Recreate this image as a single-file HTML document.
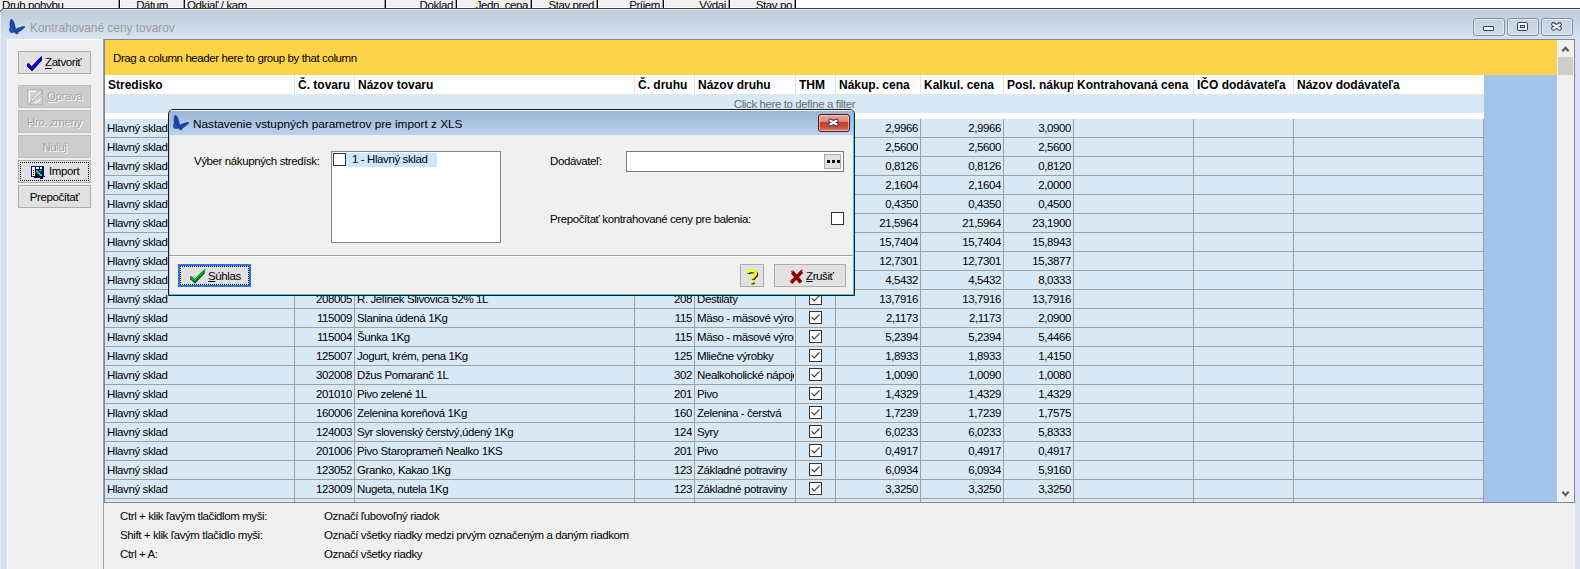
<!DOCTYPE html><html><head><meta charset="utf-8"><title>Kontrahované ceny tovarov</title><style>
*{margin:0;padding:0;box-sizing:border-box}
html,body{width:1580px;height:569px;overflow:hidden;background:#fff}
body{position:relative;font-family:"Liberation Sans",sans-serif;font-size:11.5px;color:#000;letter-spacing:-0.4px}
.a{position:absolute}
.t{position:absolute;white-space:nowrap;line-height:18px}
.hs{position:absolute;top:0;width:3px;height:8px;background:linear-gradient(90deg,#a0a0a0 0,#a0a0a0 1px,#000 1px,#000 2px,#fff 2px)}
.ht{position:absolute;top:-2px;white-space:nowrap;line-height:14px}
.btn{position:absolute;left:18px;width:73px;height:23px;background:#e1e1e1;border:1px solid #adadad;line-height:23px;text-align:center;white-space:nowrap}
.dis{background:#cccccc;border-color:#bfbfbf;color:#a3a3a3;text-shadow:1px 1px 0 #fff}
.row{position:absolute;left:105px;width:1379px;height:18px;background:#d9e8f5}
.rl{position:absolute;left:105px;width:1379px;height:1px;background:#a0a0a0}
.cl{position:absolute;width:1px;background:#a0a0a0}
.cell{position:absolute;white-space:nowrap;overflow:hidden;line-height:18px;height:18px}
.hdr{position:absolute;white-space:nowrap;overflow:hidden;line-height:19px;height:19px;font-weight:bold;font-size:12px;letter-spacing:0}
.hsep{position:absolute;top:75px;width:1px;height:19px;background:#e3e3e3}
.chk{position:absolute;width:13px;height:13px;border:1px solid #333;background:#fff}
.tbb{position:absolute;top:18px;width:32px;height:18px;border:1px solid #8591ab;border-radius:3px;background:linear-gradient(#c6d3e1,#cfdbe8);box-shadow:inset 0 0 0 1px rgba(255,255,255,.45)}
</style></head><body>
<div class="a" style="left:0;top:0;width:797px;height:9px;background:#f0f0f0;overflow:hidden">
<div class="a" style="left:0;top:7px;width:797px;height:1px;background:#fff"></div>
<div class="hs" style="left:118px"></div>
<div class="hs" style="left:183px"></div>
<div class="hs" style="left:384px"></div>
<div class="hs" style="left:455px"></div>
<div class="hs" style="left:530px"></div>
<div class="hs" style="left:596px"></div>
<div class="hs" style="left:662px"></div>
<div class="hs" style="left:728px"></div>
<div class="hs" style="left:794px"></div>
<div class="ht" style="left:2px">Druh pohybu</div>
<div class="ht" style="right:629px">Dátum</div>
<div class="ht" style="left:187px">Odkiaľ / kam</div>
<div class="ht" style="right:344px">Doklad</div>
<div class="ht" style="right:269px">Jedn. cena</div>
<div class="ht" style="right:203px">Stav pred</div>
<div class="ht" style="right:137px">Príjem</div>
<div class="ht" style="right:71px">Výdaj</div>
<div class="ht" style="right:5px">Stav po</div>
</div>
<div class="a" style="left:-1px;top:8px;width:1600px;height:600px;border:1px solid #3c3c3c;border-top-left-radius:6px;background:linear-gradient(#bdccdb 0px,#c3d1df 8px,#d5e2ef 28px,#d6e3f1 30px);overflow:hidden">
<div class="a" style="left:0;top:0;width:100%;height:1px;background:#e6edf4"></div>
<div class="a" style="left:0;top:0;width:1px;height:100%;background:#e6edf4"></div>
</div>
<div class="a" style="left:6px;top:16px;width:24px;height:22px"><svg width="24" height="22" viewBox="0 0 24 22"><path d="M5.4 3 C6.8 3.2 7.8 5 8.6 7.5 L10 12.7 C12.5 11.2 15.5 10.3 19 10 L19 11.3 C17 13.5 14.8 15.2 12.7 16.2 C12.4 17.2 11.8 18.2 10.8 18.2 C9.8 18.2 9.2 17.3 8.9 16.4 C7.2 16.6 5.5 16.8 4.2 16.6 C3.4 15.8 3 14.2 3.1 13 C3.4 12.2 3.8 11.8 3.9 11.5 C3.6 9 3.6 6.5 3.9 5 C4.2 3.8 4.7 3.1 5.4 3Z" fill="#1b46a9"/><path d="M4.6 12.5 L6.5 14.8" stroke="#5a7cc8" stroke-width="0.8"/></svg></div>
<div class="a" style="left:30px;top:17px;line-height:22px;font-size:11.9px;letter-spacing:0;color:#9a98a0;white-space:nowrap">Kontrahované ceny tovarov</div>
<div class="tbb" style="left:1473px"></div>
<div class="tbb" style="left:1507px"></div>
<div class="tbb" style="left:1541px"></div>
<div class="a" style="left:1483px;top:26px;width:11px;height:5px;border:1px solid #3a3f4a;border-radius:1px;background:#f4f4f4"></div>
<div class="a" style="left:1517px;top:22px;width:11px;height:9px;border:1px solid #3a3f4a;border-radius:1.5px;background:linear-gradient(#fafafa,#e4e4e4)"></div>
<div class="a" style="left:1520px;top:25px;width:5px;height:3px;border:1px solid #3a3f4a;background:#d0dae6"></div>
<svg class="a" style="left:1550px;top:21px" width="13" height="11" viewBox="0 0 13 11"><path d="M3.3 3.4 L9.7 7.4 M9.7 3.4 L3.3 7.4" stroke="#3a3f4a" stroke-width="4.4" stroke-linecap="round"/><path d="M3.3 3.4 L9.7 7.4 M9.7 3.4 L3.3 7.4" stroke="#f2f2f2" stroke-width="2.4" stroke-linecap="round"/></svg>
<div class="a" style="left:7px;top:39px;width:1568px;height:600px;background:#f0f0f0;border-top:1px solid #fff;border-left:1px solid #fff"></div>
<div class="btn" style="top:51px"></div>
<div class="a" style="left:24px;top:53px;width:22px;height:20px"><svg width="22" height="20" viewBox="0 0 22 20"><polygon points="3,11.2 4.4,10 7.6,13.4 17.6,3 17.9,7.4 8.1,18.2 3,13.4" fill="#000"/><polygon points="3,11.2 4.4,10 7.6,13.4 17.6,3 17.9,6.4 8.1,17 3,12.4" fill="#0000ff"/></svg></div>
<div class="t" style="left:45px;top:53px"><u style="text-underline-offset:2px">Z</u>atvoriť</div>
<div class="btn dis" style="top:85px"></div>
<div class="a" style="left:27px;top:89px"><svg width="16" height="16" viewBox="0 0 16 16"><rect x="0.5" y="0.5" width="15" height="15" fill="#d0d0d0" stroke="#b6b6b6"/><path d="M2.5 14 V2.5 H9" stroke="#fff" stroke-width="1.2" fill="none"/><polygon points="2,15 10,3 13,0.8 15,2.5 13.5,5.5" fill="#dedede" stroke="#a6a6a6" stroke-width="0.8"/><path d="M5 11 L10.5 4.5" stroke="#fff" stroke-width="1" stroke-dasharray="1.2 0.8"/><path d="M8 13.6 Q11.5 13 13.5 10" stroke="#fff" stroke-width="1.2" fill="none"/></svg></div>
<div class="t" style="left:47px;top:87px;color:#a3a3a3;text-shadow:1px 1px 0 #fff"><u>O</u>prava</div>
<div class="btn dis" style="top:110px">Hro. zmeny</div>
<div class="btn dis" style="top:135px">Nuluj</div>
<div class="btn" style="top:160px"></div>
<div class="a" style="left:20px;top:162px;width:69px;height:19px;border:1px dotted #000"></div>
<div class="a" style="left:30px;top:165px;width:16px;height:15px"><svg width="16" height="15" viewBox="0 0 16 15"><g shape-rendering="crispEdges"><rect x="1" y="1" width="13" height="11" fill="#0000c8"/><rect x="2" y="2" width="11" height="9" fill="#fff"/><rect x="5" y="2" width="1" height="2" fill="#000"/><rect x="9" y="2" width="1" height="2" fill="#000"/><rect x="12" y="2" width="1" height="2" fill="#000"/><rect x="3" y="5" width="1" height="1" fill="#000"/><rect x="3" y="7" width="1" height="1" fill="#000"/><rect x="3" y="9" width="1" height="1" fill="#000"/><rect x="5" y="4" width="8" height="8" fill="#101010"/><rect x="4" y="12" width="9" height="1" fill="#000"/><rect x="10" y="12" width="3" height="2" fill="#000"/><rect x="14" y="11" width="1" height="1" fill="#000"/></g><path d="M6.2 5.6 L11.6 10.8" stroke="#00e8e8" stroke-width="1.8"/><path d="M9.5 5.5 L11.5 5.5" stroke="#00e8e8" stroke-width="1"/></svg></div>
<div class="t" style="left:49px;top:162px">Import</div>
<div class="btn" style="top:185px">Prepočítať</div>
<div class="a" style="left:103px;top:39px;width:1472px;height:464px;border-top:1px solid #7f8898;border-left:1px solid #9aa0a8;border-right:1px solid #7f8898;border-bottom:1px solid #7f8898;box-shadow:inset 1px 0 0 #7f8898"></div>
<div class="a" style="left:105px;top:40px;width:1452px;height:35px;background:#fdd449"></div>
<div class="t" style="left:113px;top:49px;line-height:18px">Drag a column header here to group by that column</div>
<div class="a" style="left:1557px;top:40px;width:17px;height:462px;background:#f0f0f0;border-left:1px solid #fff"></div>
<svg class="a" style="left:1559px;top:44px" width="13" height="10" viewBox="0 0 13 10"><path d="M3.4 7.2 L6.5 3.8 L9.6 7.2" stroke="#555" stroke-width="2.1" fill="none"/></svg>
<div class="a" style="left:1558px;top:57px;width:15px;height:18px;background:#cdcdcd"></div>
<svg class="a" style="left:1559px;top:488px" width="13" height="10" viewBox="0 0 13 10"><path d="M3.4 3.6 L6.5 7.2 L9.6 3.6" stroke="#555" stroke-width="2.1" fill="none"/></svg>
<div class="a" style="left:105px;top:75px;width:1379px;height:19px;background:#fff"></div>
<div class="hdr" style="left:108px;top:76px;width:186px">Stredisko</div>
<div class="hdr" style="left:298px;top:76px;width:56px">Č. tovaru</div>
<div class="hdr" style="left:358px;top:76px;width:276px">Názov tovaru</div>
<div class="hdr" style="left:638px;top:76px;width:56px">Č. druhu</div>
<div class="hdr" style="left:698px;top:76px;width:97px">Názov druhu</div>
<div class="hdr" style="left:799px;top:76px;width:36px">THM</div>
<div class="hdr" style="left:839px;top:76px;width:81px">Nákup. cena</div>
<div class="hdr" style="left:924px;top:76px;width:79px">Kalkul. cena</div>
<div class="hdr" style="left:1007px;top:76px;width:66px">Posl. nákup</div>
<div class="hdr" style="left:1077px;top:76px;width:116px">Kontrahovaná cena</div>
<div class="hdr" style="left:1197px;top:76px;width:96px">IČO dodávateľa</div>
<div class="hdr" style="left:1297px;top:76px;width:186px">Názov dodávateľa</div>
<div class="hsep" style="left:294px"></div>
<div class="hsep" style="left:354px"></div>
<div class="hsep" style="left:634px"></div>
<div class="hsep" style="left:694px"></div>
<div class="hsep" style="left:795px"></div>
<div class="hsep" style="left:835px"></div>
<div class="hsep" style="left:920px"></div>
<div class="hsep" style="left:1003px"></div>
<div class="hsep" style="left:1073px"></div>
<div class="hsep" style="left:1193px"></div>
<div class="hsep" style="left:1293px"></div>
<div class="a" style="left:1484px;top:75px;width:73px;height:427px;background:#a4c3ea"></div>
<div class="a" style="left:105px;top:94px;width:1379px;height:19px;background:#d9e8f5"></div>
<div class="t" style="left:105px;top:95px;width:1379px;text-align:center;color:#6c6c6c;line-height:19px">Click here to define a filter</div>
<div class="a" style="left:105px;top:113px;width:1379px;height:6px;background:#fff"></div>
<div class="row" style="top:119px;height:18px"></div>
<div class="rl" style="top:137px"></div>
<div class="cell" style="left:107px;top:119px;width:186px">Hlavný sklad</div>
<div class="chk" style="left:809px;top:121px"></div>
<svg class="a" style="left:811px;top:123px" width="9" height="9" viewBox="0 0 9 9"><path d="M0.6 4.2 L3.2 6.9 L8.6 1.4" stroke="#3a3a3a" stroke-width="1.2" fill="none"/></svg>
<div class="cell" style="left:836px;top:119px;width:82px;text-align:right">2,9966</div>
<div class="cell" style="left:921px;top:119px;width:80px;text-align:right">2,9966</div>
<div class="cell" style="left:1004px;top:119px;width:67px;text-align:right">3,0900</div>
<div class="row" style="top:138px;height:18px"></div>
<div class="rl" style="top:156px"></div>
<div class="cell" style="left:107px;top:138px;width:186px">Hlavný sklad</div>
<div class="chk" style="left:809px;top:140px"></div>
<svg class="a" style="left:811px;top:142px" width="9" height="9" viewBox="0 0 9 9"><path d="M0.6 4.2 L3.2 6.9 L8.6 1.4" stroke="#3a3a3a" stroke-width="1.2" fill="none"/></svg>
<div class="cell" style="left:836px;top:138px;width:82px;text-align:right">2,5600</div>
<div class="cell" style="left:921px;top:138px;width:80px;text-align:right">2,5600</div>
<div class="cell" style="left:1004px;top:138px;width:67px;text-align:right">2,5600</div>
<div class="row" style="top:157px;height:18px"></div>
<div class="rl" style="top:175px"></div>
<div class="cell" style="left:107px;top:157px;width:186px">Hlavný sklad</div>
<div class="chk" style="left:809px;top:159px"></div>
<svg class="a" style="left:811px;top:161px" width="9" height="9" viewBox="0 0 9 9"><path d="M0.6 4.2 L3.2 6.9 L8.6 1.4" stroke="#3a3a3a" stroke-width="1.2" fill="none"/></svg>
<div class="cell" style="left:836px;top:157px;width:82px;text-align:right">0,8126</div>
<div class="cell" style="left:921px;top:157px;width:80px;text-align:right">0,8126</div>
<div class="cell" style="left:1004px;top:157px;width:67px;text-align:right">0,8120</div>
<div class="row" style="top:176px;height:18px"></div>
<div class="rl" style="top:194px"></div>
<div class="cell" style="left:107px;top:176px;width:186px">Hlavný sklad</div>
<div class="chk" style="left:809px;top:178px"></div>
<svg class="a" style="left:811px;top:180px" width="9" height="9" viewBox="0 0 9 9"><path d="M0.6 4.2 L3.2 6.9 L8.6 1.4" stroke="#3a3a3a" stroke-width="1.2" fill="none"/></svg>
<div class="cell" style="left:836px;top:176px;width:82px;text-align:right">2,1604</div>
<div class="cell" style="left:921px;top:176px;width:80px;text-align:right">2,1604</div>
<div class="cell" style="left:1004px;top:176px;width:67px;text-align:right">2,0000</div>
<div class="row" style="top:195px;height:18px"></div>
<div class="rl" style="top:213px"></div>
<div class="cell" style="left:107px;top:195px;width:186px">Hlavný sklad</div>
<div class="chk" style="left:809px;top:197px"></div>
<svg class="a" style="left:811px;top:199px" width="9" height="9" viewBox="0 0 9 9"><path d="M0.6 4.2 L3.2 6.9 L8.6 1.4" stroke="#3a3a3a" stroke-width="1.2" fill="none"/></svg>
<div class="cell" style="left:836px;top:195px;width:82px;text-align:right">0,4350</div>
<div class="cell" style="left:921px;top:195px;width:80px;text-align:right">0,4350</div>
<div class="cell" style="left:1004px;top:195px;width:67px;text-align:right">0,4500</div>
<div class="row" style="top:214px;height:18px"></div>
<div class="rl" style="top:232px"></div>
<div class="cell" style="left:107px;top:214px;width:186px">Hlavný sklad</div>
<div class="chk" style="left:809px;top:216px"></div>
<svg class="a" style="left:811px;top:218px" width="9" height="9" viewBox="0 0 9 9"><path d="M0.6 4.2 L3.2 6.9 L8.6 1.4" stroke="#3a3a3a" stroke-width="1.2" fill="none"/></svg>
<div class="cell" style="left:836px;top:214px;width:82px;text-align:right">21,5964</div>
<div class="cell" style="left:921px;top:214px;width:80px;text-align:right">21,5964</div>
<div class="cell" style="left:1004px;top:214px;width:67px;text-align:right">23,1900</div>
<div class="row" style="top:233px;height:18px"></div>
<div class="rl" style="top:251px"></div>
<div class="cell" style="left:107px;top:233px;width:186px">Hlavný sklad</div>
<div class="chk" style="left:809px;top:235px"></div>
<svg class="a" style="left:811px;top:237px" width="9" height="9" viewBox="0 0 9 9"><path d="M0.6 4.2 L3.2 6.9 L8.6 1.4" stroke="#3a3a3a" stroke-width="1.2" fill="none"/></svg>
<div class="cell" style="left:836px;top:233px;width:82px;text-align:right">15,7404</div>
<div class="cell" style="left:921px;top:233px;width:80px;text-align:right">15,7404</div>
<div class="cell" style="left:1004px;top:233px;width:67px;text-align:right">15,8943</div>
<div class="row" style="top:252px;height:18px"></div>
<div class="rl" style="top:270px"></div>
<div class="cell" style="left:107px;top:252px;width:186px">Hlavný sklad</div>
<div class="chk" style="left:809px;top:254px"></div>
<svg class="a" style="left:811px;top:256px" width="9" height="9" viewBox="0 0 9 9"><path d="M0.6 4.2 L3.2 6.9 L8.6 1.4" stroke="#3a3a3a" stroke-width="1.2" fill="none"/></svg>
<div class="cell" style="left:836px;top:252px;width:82px;text-align:right">12,7301</div>
<div class="cell" style="left:921px;top:252px;width:80px;text-align:right">12,7301</div>
<div class="cell" style="left:1004px;top:252px;width:67px;text-align:right">15,3877</div>
<div class="row" style="top:271px;height:18px"></div>
<div class="rl" style="top:289px"></div>
<div class="cell" style="left:107px;top:271px;width:186px">Hlavný sklad</div>
<div class="chk" style="left:809px;top:273px"></div>
<svg class="a" style="left:811px;top:275px" width="9" height="9" viewBox="0 0 9 9"><path d="M0.6 4.2 L3.2 6.9 L8.6 1.4" stroke="#3a3a3a" stroke-width="1.2" fill="none"/></svg>
<div class="cell" style="left:836px;top:271px;width:82px;text-align:right">4,5432</div>
<div class="cell" style="left:921px;top:271px;width:80px;text-align:right">4,5432</div>
<div class="cell" style="left:1004px;top:271px;width:67px;text-align:right">8,0333</div>
<div class="row" style="top:290px;height:18px"></div>
<div class="rl" style="top:308px"></div>
<div class="cell" style="left:107px;top:290px;width:186px">Hlavný sklad</div>
<div class="cell" style="left:295px;top:290px;width:57px;text-align:right">208005</div>
<div class="cell" style="left:357px;top:290px;width:276px">R. Jelínek Slivovica 52% 1L</div>
<div class="cell" style="left:635px;top:290px;width:57px;text-align:right">208</div>
<div class="cell" style="left:697px;top:290px;width:97px">Destiláty</div>
<div class="chk" style="left:809px;top:292px"></div>
<svg class="a" style="left:811px;top:294px" width="9" height="9" viewBox="0 0 9 9"><path d="M0.6 4.2 L3.2 6.9 L8.6 1.4" stroke="#3a3a3a" stroke-width="1.2" fill="none"/></svg>
<div class="cell" style="left:836px;top:290px;width:82px;text-align:right">13,7916</div>
<div class="cell" style="left:921px;top:290px;width:80px;text-align:right">13,7916</div>
<div class="cell" style="left:1004px;top:290px;width:67px;text-align:right">13,7916</div>
<div class="row" style="top:309px;height:18px"></div>
<div class="rl" style="top:327px"></div>
<div class="cell" style="left:107px;top:309px;width:186px">Hlavný sklad</div>
<div class="cell" style="left:295px;top:309px;width:57px;text-align:right">115009</div>
<div class="cell" style="left:357px;top:309px;width:276px">Slanina údená 1Kg</div>
<div class="cell" style="left:635px;top:309px;width:57px;text-align:right">115</div>
<div class="cell" style="left:697px;top:309px;width:97px">Mäso - mäsové výrobky</div>
<div class="chk" style="left:809px;top:311px"></div>
<svg class="a" style="left:811px;top:313px" width="9" height="9" viewBox="0 0 9 9"><path d="M0.6 4.2 L3.2 6.9 L8.6 1.4" stroke="#3a3a3a" stroke-width="1.2" fill="none"/></svg>
<div class="cell" style="left:836px;top:309px;width:82px;text-align:right">2,1173</div>
<div class="cell" style="left:921px;top:309px;width:80px;text-align:right">2,1173</div>
<div class="cell" style="left:1004px;top:309px;width:67px;text-align:right">2,0900</div>
<div class="row" style="top:328px;height:18px"></div>
<div class="rl" style="top:346px"></div>
<div class="cell" style="left:107px;top:328px;width:186px">Hlavný sklad</div>
<div class="cell" style="left:295px;top:328px;width:57px;text-align:right">115004</div>
<div class="cell" style="left:357px;top:328px;width:276px">Šunka 1Kg</div>
<div class="cell" style="left:635px;top:328px;width:57px;text-align:right">115</div>
<div class="cell" style="left:697px;top:328px;width:97px">Mäso - mäsové výrobky</div>
<div class="chk" style="left:809px;top:330px"></div>
<svg class="a" style="left:811px;top:332px" width="9" height="9" viewBox="0 0 9 9"><path d="M0.6 4.2 L3.2 6.9 L8.6 1.4" stroke="#3a3a3a" stroke-width="1.2" fill="none"/></svg>
<div class="cell" style="left:836px;top:328px;width:82px;text-align:right">5,2394</div>
<div class="cell" style="left:921px;top:328px;width:80px;text-align:right">5,2394</div>
<div class="cell" style="left:1004px;top:328px;width:67px;text-align:right">5,4466</div>
<div class="row" style="top:347px;height:18px"></div>
<div class="rl" style="top:365px"></div>
<div class="cell" style="left:107px;top:347px;width:186px">Hlavný sklad</div>
<div class="cell" style="left:295px;top:347px;width:57px;text-align:right">125007</div>
<div class="cell" style="left:357px;top:347px;width:276px">Jogurt, krém, pena 1Kg</div>
<div class="cell" style="left:635px;top:347px;width:57px;text-align:right">125</div>
<div class="cell" style="left:697px;top:347px;width:97px">Mliečne výrobky</div>
<div class="chk" style="left:809px;top:349px"></div>
<svg class="a" style="left:811px;top:351px" width="9" height="9" viewBox="0 0 9 9"><path d="M0.6 4.2 L3.2 6.9 L8.6 1.4" stroke="#3a3a3a" stroke-width="1.2" fill="none"/></svg>
<div class="cell" style="left:836px;top:347px;width:82px;text-align:right">1,8933</div>
<div class="cell" style="left:921px;top:347px;width:80px;text-align:right">1,8933</div>
<div class="cell" style="left:1004px;top:347px;width:67px;text-align:right">1,4150</div>
<div class="row" style="top:366px;height:18px"></div>
<div class="rl" style="top:384px"></div>
<div class="cell" style="left:107px;top:366px;width:186px">Hlavný sklad</div>
<div class="cell" style="left:295px;top:366px;width:57px;text-align:right">302008</div>
<div class="cell" style="left:357px;top:366px;width:276px">Džus Pomaranč 1L</div>
<div class="cell" style="left:635px;top:366px;width:57px;text-align:right">302</div>
<div class="cell" style="left:697px;top:366px;width:97px">Nealkoholické nápoje</div>
<div class="chk" style="left:809px;top:368px"></div>
<svg class="a" style="left:811px;top:370px" width="9" height="9" viewBox="0 0 9 9"><path d="M0.6 4.2 L3.2 6.9 L8.6 1.4" stroke="#3a3a3a" stroke-width="1.2" fill="none"/></svg>
<div class="cell" style="left:836px;top:366px;width:82px;text-align:right">1,0090</div>
<div class="cell" style="left:921px;top:366px;width:80px;text-align:right">1,0090</div>
<div class="cell" style="left:1004px;top:366px;width:67px;text-align:right">1,0080</div>
<div class="row" style="top:385px;height:18px"></div>
<div class="rl" style="top:403px"></div>
<div class="cell" style="left:107px;top:385px;width:186px">Hlavný sklad</div>
<div class="cell" style="left:295px;top:385px;width:57px;text-align:right">201010</div>
<div class="cell" style="left:357px;top:385px;width:276px">Pivo zelené 1L</div>
<div class="cell" style="left:635px;top:385px;width:57px;text-align:right">201</div>
<div class="cell" style="left:697px;top:385px;width:97px">Pivo</div>
<div class="chk" style="left:809px;top:387px"></div>
<svg class="a" style="left:811px;top:389px" width="9" height="9" viewBox="0 0 9 9"><path d="M0.6 4.2 L3.2 6.9 L8.6 1.4" stroke="#3a3a3a" stroke-width="1.2" fill="none"/></svg>
<div class="cell" style="left:836px;top:385px;width:82px;text-align:right">1,4329</div>
<div class="cell" style="left:921px;top:385px;width:80px;text-align:right">1,4329</div>
<div class="cell" style="left:1004px;top:385px;width:67px;text-align:right">1,4329</div>
<div class="row" style="top:404px;height:18px"></div>
<div class="rl" style="top:422px"></div>
<div class="cell" style="left:107px;top:404px;width:186px">Hlavný sklad</div>
<div class="cell" style="left:295px;top:404px;width:57px;text-align:right">160006</div>
<div class="cell" style="left:357px;top:404px;width:276px">Zelenina koreňová 1Kg</div>
<div class="cell" style="left:635px;top:404px;width:57px;text-align:right">160</div>
<div class="cell" style="left:697px;top:404px;width:97px">Zelenina - čerstvá</div>
<div class="chk" style="left:809px;top:406px"></div>
<svg class="a" style="left:811px;top:408px" width="9" height="9" viewBox="0 0 9 9"><path d="M0.6 4.2 L3.2 6.9 L8.6 1.4" stroke="#3a3a3a" stroke-width="1.2" fill="none"/></svg>
<div class="cell" style="left:836px;top:404px;width:82px;text-align:right">1,7239</div>
<div class="cell" style="left:921px;top:404px;width:80px;text-align:right">1,7239</div>
<div class="cell" style="left:1004px;top:404px;width:67px;text-align:right">1,7575</div>
<div class="row" style="top:423px;height:18px"></div>
<div class="rl" style="top:441px"></div>
<div class="cell" style="left:107px;top:423px;width:186px">Hlavný sklad</div>
<div class="cell" style="left:295px;top:423px;width:57px;text-align:right">124003</div>
<div class="cell" style="left:357px;top:423px;width:276px">Syr slovenský čerstvý,údený 1Kg</div>
<div class="cell" style="left:635px;top:423px;width:57px;text-align:right">124</div>
<div class="cell" style="left:697px;top:423px;width:97px">Syry</div>
<div class="chk" style="left:809px;top:425px"></div>
<svg class="a" style="left:811px;top:427px" width="9" height="9" viewBox="0 0 9 9"><path d="M0.6 4.2 L3.2 6.9 L8.6 1.4" stroke="#3a3a3a" stroke-width="1.2" fill="none"/></svg>
<div class="cell" style="left:836px;top:423px;width:82px;text-align:right">6,0233</div>
<div class="cell" style="left:921px;top:423px;width:80px;text-align:right">6,0233</div>
<div class="cell" style="left:1004px;top:423px;width:67px;text-align:right">5,8333</div>
<div class="row" style="top:442px;height:18px"></div>
<div class="rl" style="top:460px"></div>
<div class="cell" style="left:107px;top:442px;width:186px">Hlavný sklad</div>
<div class="cell" style="left:295px;top:442px;width:57px;text-align:right">201006</div>
<div class="cell" style="left:357px;top:442px;width:276px">Pivo Staroprameň Nealko 1KS</div>
<div class="cell" style="left:635px;top:442px;width:57px;text-align:right">201</div>
<div class="cell" style="left:697px;top:442px;width:97px">Pivo</div>
<div class="chk" style="left:809px;top:444px"></div>
<svg class="a" style="left:811px;top:446px" width="9" height="9" viewBox="0 0 9 9"><path d="M0.6 4.2 L3.2 6.9 L8.6 1.4" stroke="#3a3a3a" stroke-width="1.2" fill="none"/></svg>
<div class="cell" style="left:836px;top:442px;width:82px;text-align:right">0,4917</div>
<div class="cell" style="left:921px;top:442px;width:80px;text-align:right">0,4917</div>
<div class="cell" style="left:1004px;top:442px;width:67px;text-align:right">0,4917</div>
<div class="row" style="top:461px;height:18px"></div>
<div class="rl" style="top:479px"></div>
<div class="cell" style="left:107px;top:461px;width:186px">Hlavný sklad</div>
<div class="cell" style="left:295px;top:461px;width:57px;text-align:right">123052</div>
<div class="cell" style="left:357px;top:461px;width:276px">Granko, Kakao 1Kg</div>
<div class="cell" style="left:635px;top:461px;width:57px;text-align:right">123</div>
<div class="cell" style="left:697px;top:461px;width:97px">Základné potraviny</div>
<div class="chk" style="left:809px;top:463px"></div>
<svg class="a" style="left:811px;top:465px" width="9" height="9" viewBox="0 0 9 9"><path d="M0.6 4.2 L3.2 6.9 L8.6 1.4" stroke="#3a3a3a" stroke-width="1.2" fill="none"/></svg>
<div class="cell" style="left:836px;top:461px;width:82px;text-align:right">6,0934</div>
<div class="cell" style="left:921px;top:461px;width:80px;text-align:right">6,0934</div>
<div class="cell" style="left:1004px;top:461px;width:67px;text-align:right">5,9160</div>
<div class="row" style="top:480px;height:18px"></div>
<div class="rl" style="top:498px"></div>
<div class="cell" style="left:107px;top:480px;width:186px">Hlavný sklad</div>
<div class="cell" style="left:295px;top:480px;width:57px;text-align:right">123009</div>
<div class="cell" style="left:357px;top:480px;width:276px">Nugeta, nutela 1Kg</div>
<div class="cell" style="left:635px;top:480px;width:57px;text-align:right">123</div>
<div class="cell" style="left:697px;top:480px;width:97px">Základné potraviny</div>
<div class="chk" style="left:809px;top:482px"></div>
<svg class="a" style="left:811px;top:484px" width="9" height="9" viewBox="0 0 9 9"><path d="M0.6 4.2 L3.2 6.9 L8.6 1.4" stroke="#3a3a3a" stroke-width="1.2" fill="none"/></svg>
<div class="cell" style="left:836px;top:480px;width:82px;text-align:right">3,3250</div>
<div class="cell" style="left:921px;top:480px;width:80px;text-align:right">3,3250</div>
<div class="cell" style="left:1004px;top:480px;width:67px;text-align:right">3,3250</div>
<div class="row" style="top:499px;height:3px"></div>
<div class="cl" style="left:294px;top:119px;height:383px"></div>
<div class="cl" style="left:354px;top:119px;height:383px"></div>
<div class="cl" style="left:634px;top:119px;height:383px"></div>
<div class="cl" style="left:694px;top:119px;height:383px"></div>
<div class="cl" style="left:795px;top:119px;height:383px"></div>
<div class="cl" style="left:835px;top:119px;height:383px"></div>
<div class="cl" style="left:920px;top:119px;height:383px"></div>
<div class="cl" style="left:1003px;top:119px;height:383px"></div>
<div class="cl" style="left:1073px;top:119px;height:383px"></div>
<div class="cl" style="left:1193px;top:119px;height:383px"></div>
<div class="cl" style="left:1293px;top:119px;height:383px"></div>
<div class="cl" style="left:1483px;top:119px;height:383px"></div>
<div class="a" style="left:103px;top:503px;width:1px;height:66px;background:#a0a0a0"></div>
<div class="t" style="left:120px;top:507px">Ctrl + klik ľavým tlačidlom myši:</div>
<div class="t" style="left:324px;top:507px">Označí ľubovoľný riadok</div>
<div class="t" style="left:120px;top:526px">Shift + klik ľavým tlačidlo myši:</div>
<div class="t" style="left:324px;top:526px">Označí všetky riadky medzi prvým označeným a daným riadkom</div>
<div class="t" style="left:120px;top:545px">Ctrl + A:</div>
<div class="t" style="left:324px;top:545px">Označí všetky riadky</div>
<div class="a" style="left:168px;top:109px;width:687px;height:187px;border:1px solid #1c1c1c;border-radius:5px 5px 0 0;background:linear-gradient(#9ab3d3 0px,#a6bfdc 10px,#b9d1eb 24px);overflow:hidden">
<div class="a" style="left:0;top:0;width:100%;height:1px;background:#f4f7fb"></div>
<div class="a" style="left:1px;top:25px;width:683px;height:159px;background:#f0f0f0"></div>
<div class="a" style="left:684px;top:1px;width:1px;height:185px;background:#3cc8f0"></div>
<div class="a" style="left:0;top:184px;width:100%;height:1px;background:#3cc8f0"></div>
</div>
<div class="a" style="left:170px;top:112px;width:24px;height:22px"><svg width="24" height="22" viewBox="0 0 24 22"><path d="M5.4 3 C6.8 3.2 7.8 5 8.6 7.5 L10 12.7 C12.5 11.2 15.5 10.3 19 10 L19 11.3 C17 13.5 14.8 15.2 12.7 16.2 C12.4 17.2 11.8 18.2 10.8 18.2 C9.8 18.2 9.2 17.3 8.9 16.4 C7.2 16.6 5.5 16.8 4.2 16.6 C3.4 15.8 3 14.2 3.1 13 C3.4 12.2 3.8 11.8 3.9 11.5 C3.6 9 3.6 6.5 3.9 5 C4.2 3.8 4.7 3.1 5.4 3Z" fill="#1b46a9"/><path d="M4.6 12.5 L6.5 14.8" stroke="#5a7cc8" stroke-width="0.8"/></svg></div>
<div class="a" style="left:193px;top:113px;line-height:22px;font-size:11.8px;letter-spacing:0;color:#000;white-space:nowrap">Nastavenie vstupných parametrov pre import z XLS</div>
<div class="a" style="left:818px;top:114px;width:32px;height:18px;border:1px solid #4a1820;border-radius:3px;background:linear-gradient(#eaa898 0%,#dc8c78 40%,#c0402a 45%,#c85038 75%,#dc8070 100%);box-shadow:inset 0 0 0 1px rgba(255,220,210,.6)"></div>
<svg class="a" style="left:827px;top:117px" width="13" height="11" viewBox="0 0 13 11"><path d="M3.6 3.7 L9.4 7.1 M9.4 3.7 L3.6 7.1" stroke="#3a3a4a" stroke-width="4.4" stroke-linecap="round"/><path d="M3.6 3.7 L9.4 7.1 M9.4 3.7 L3.6 7.1" stroke="#fff" stroke-width="2.4" stroke-linecap="round"/></svg>
<div class="t" style="left:194px;top:152px">Výber nákupných stredísk:</div>
<div class="a" style="left:331px;top:151px;width:170px;height:92px;border:1px solid #828790;background:#fff"></div>
<div class="a" style="left:346px;top:153px;width:91px;height:14px;background:#cce8ff"></div>
<div class="chk" style="left:333px;top:153px;border-color:#333"></div>
<div class="t" style="left:352px;top:151px;line-height:16px">1 - Hlavný sklad</div>
<div class="t" style="left:550px;top:152px">Dodávateľ:</div>
<div class="a" style="left:626px;top:151px;width:218px;height:21px;border:1px solid #7a7a7a;background:#fff"></div>
<div class="a" style="left:824px;top:154px;width:17px;height:15px;border:1px solid #adadad;background:#e1e1e1"></div>
<div class="a" style="left:827px;top:160px;width:3px;height:3px;background:#000"></div>
<div class="a" style="left:832px;top:160px;width:3px;height:3px;background:#000"></div>
<div class="a" style="left:837px;top:160px;width:3px;height:3px;background:#000"></div>
<div class="t" style="left:550px;top:210px">Prepočítať kontrahované ceny pre balenia:</div>
<div class="chk" style="left:831px;top:212px"></div>
<div class="a" style="left:169px;top:255px;width:684px;height:1px;background:#a0a0a0"></div>
<div class="a" style="left:169px;top:256px;width:684px;height:1px;background:#fff"></div>
<div class="a" style="left:178px;top:264px;width:73px;height:23px;border:2px solid #2a76d8;background:#e1e1e1"></div>
<div class="a" style="left:180px;top:266px;width:69px;height:19px;border:1px dotted #000"></div>
<div class="a" style="left:186px;top:266px;width:22px;height:20px"><svg width="22" height="20" viewBox="0 0 22 20"><polygon points="4,10.9 5.3,10 8.6,13 18.6,3 19,7 9,17.4 4,13" fill="#000080"/><polygon points="4,10.9 5.3,10 8.6,13 18.6,3 19,6.2 9,16.4 4,12.2" fill="#009a00"/><polyline points="4.5,10.9 8.6,14.4 18.8,3.6" fill="none" stroke="#00e000" stroke-width="1"/></svg></div>
<div class="t" style="left:208px;top:267px"><u>S</u>úhlas</div>
<div class="a" style="left:740px;top:264px;width:24px;height:23px;border:1px solid #adadad;background:#e1e1e1"></div>
<svg class="a" style="left:740px;top:264px" width="24" height="23" viewBox="0 0 24 23"><g transform="translate(0.9,0.9)" fill="none" stroke="#000"><path d="M7.5 9 C8.2 6.6 15.2 5.8 15.9 9.2 C16.3 11.6 12.6 12.3 12.1 15.2" stroke-width="2.8"/><path d="M10.5 18.4 H13.6" stroke-width="2"/></g><g fill="none" stroke="#ffff00"><path d="M7.5 9 C8.2 6.6 15.2 5.8 15.9 9.2 C16.3 11.6 12.6 12.3 12.1 15.2" stroke-width="2.8"/><path d="M10.5 18.4 H13.6" stroke-width="2"/></g></svg>
<div class="a" style="left:774px;top:264px;width:72px;height:23px;border:1px solid #adadad;background:#e1e1e1"></div>
<div class="a" style="left:786px;top:266px;width:22px;height:22px"><svg width="22" height="22" viewBox="0 0 22 22"><path d="M6.2 6 L15 16.5 M16 5.5 L5 16.8" stroke="#8a0000" stroke-width="3.6"/><path d="M4.3 15.8 L6.3 13.8 M5.2 5.8 L6.8 4.6 M14.8 4.6 L16.6 4.4" stroke="#ff0000" stroke-width="1.3"/></svg></div>
<div class="t" style="left:806px;top:267px"><u>Z</u>rušiť</div>
</body></html>
